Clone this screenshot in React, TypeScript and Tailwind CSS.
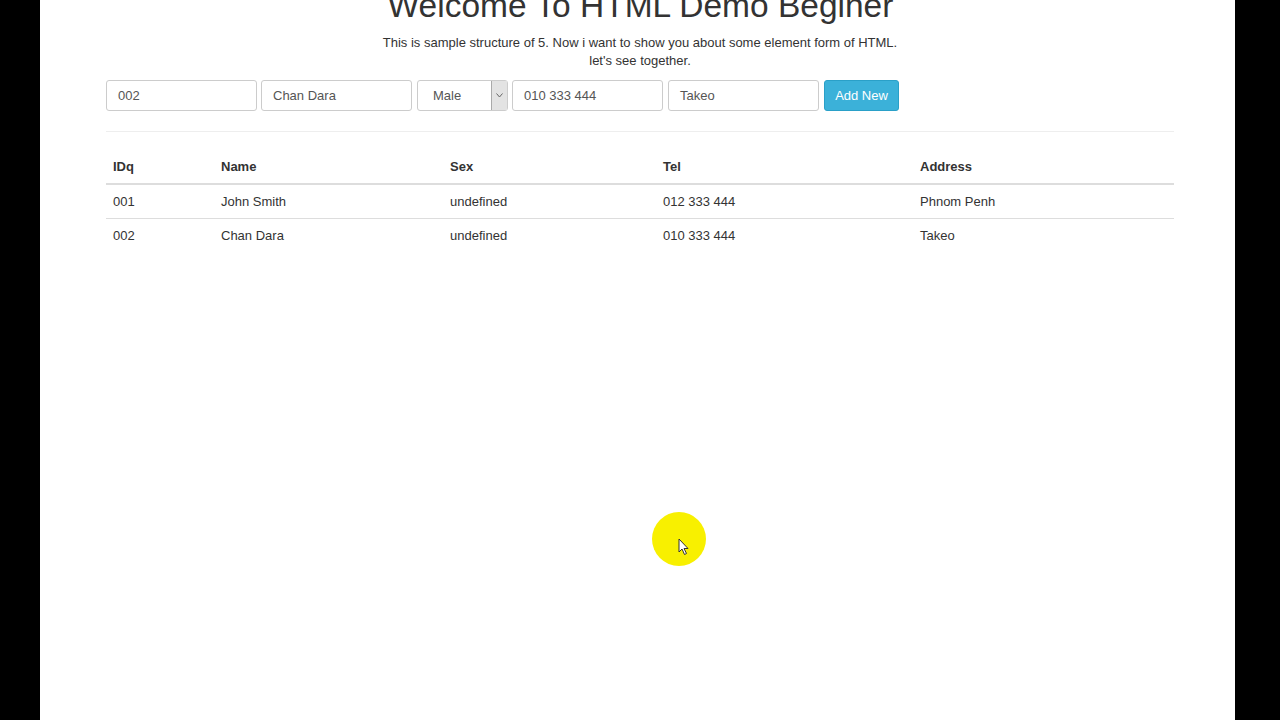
export default function App() {
  const rows = [
    ["001", "John Smith", "undefined", "012 333 444", "Phnom Penh"],
    ["002", "Chan Dara", "undefined", "010 333 444", "Takeo"],
  ];
  const cols = ["w-[108px]", "w-[229px]", "w-[213px]", "w-[257px]", "flex-1"];
  return (
    <div className="relative w-[1280px] h-[720px] bg-black flex overflow-hidden" style={{ fontFamily: '"Liberation Sans", Arial, sans-serif' }}>
      <div className="w-[40px]" />
      <div className="w-[1195px] bg-white text-[#333]">
        <div className="mx-[66px] w-[1068px]">
          <h1 className="text-center text-[33.5px] leading-[40px] mt-[-14px] ml-[1px]">Welcome To HTML Demo Beginer</h1>
          <p className="text-center text-[13px] leading-[18px] mt-[8px] text-[#333]">
            This is sample structure of 5. Now i want to show you about some element form of HTML.<br />let's see together.
          </p>
          <div className="flex mt-[10px] text-[13px]">
            <div className="w-[151px] h-[31px] border border-[#ccc] rounded-[3px] px-[11px] flex items-center text-[#555]">002</div>
            <div className="ml-[4px] w-[151px] h-[31px] border border-[#ccc] rounded-[3px] px-[11px] flex items-center text-[#555]">Chan Dara</div>
            <div className="ml-[5px] w-[91px] h-[31px] border border-[#ccc] rounded-[3px] pl-[15px] flex items-center text-[#555] relative">
              Male
              <div className="absolute right-0 top-0 bottom-0 w-[16px] bg-[#e3e3e3] border-l border-[#aaa] flex items-center justify-center">
                <svg width="7" height="5" viewBox="0 0 7 5"><path d="M0.5 0.5 L3.5 4 L6.5 0.5" fill="none" stroke="#666" strokeWidth="1" /></svg>
              </div>
            </div>
            <div className="ml-[4px] w-[151px] h-[31px] border border-[#ccc] rounded-[3px] px-[11px] flex items-center text-[#555]">010 333 444</div>
            <div className="ml-[5px] w-[151px] h-[31px] border border-[#ccc] rounded-[3px] px-[11px] flex items-center text-[#555]">Takeo</div>
            <div className="ml-[5px] w-[75px] h-[31px] rounded-[3px] bg-[#3bb1d9] border border-[#2aa0c8] text-white flex items-center justify-center">Add New</div>
          </div>
          <div className="h-px bg-[#eee] mt-[20px]" />
          <div className="mt-[18px] text-[13px]">
            <div className="flex h-[35px] items-center px-[7px] font-bold border-b-2 border-[#ddd]">
              {["IDq", "Name", "Sex", "Tel", "Address"].map((h, i) => <div key={h} className={cols[i]}>{h}</div>)}
            </div>
            {rows.map((r, k) => (
              <div key={k} className={`flex h-[34px] items-center px-[7px] ${k === 0 ? "border-b border-[#ddd]" : ""}`}>
                {r.map((c, i) => <div key={i} className={cols[i]}>{c}</div>)}
              </div>
            ))}
          </div>
        </div>
      </div>
      <div className="absolute left-[652px] top-[512px] w-[54px] h-[54px] rounded-full bg-[#f8f000]" />
      <svg className="absolute left-[678px] top-[538px]" width="12" height="18" viewBox="0 0 12 18">
        <path d="M1 1 L1 14 L4 11 L6.5 16.5 L8.5 15.5 L6 10.5 L10 10.5 Z" fill="white" stroke="#333" strokeWidth="1" />
      </svg>
    </div>
  );
}
